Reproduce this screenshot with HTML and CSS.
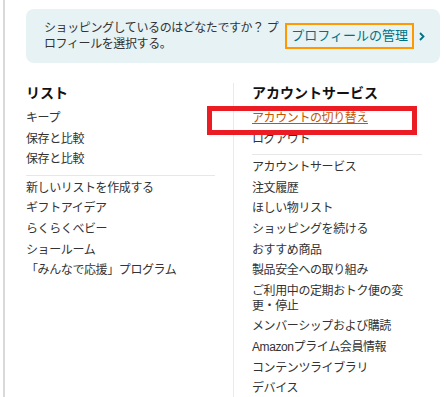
FILE: index.html
```html
<!DOCTYPE html>
<html lang="ja">
<head>
    <meta charset="UTF-8">
    <meta name="viewport" content="width=device-width, initial-scale=1.0">
    <title>アカウント＆リスト</title>
    <link rel="stylesheet" href="styles.css">
</head>
<body>
    <div class="flyout">
        <!-- Profile prompt -->
        <div class="profile-panel">
            <span class="profile-text">ショッピングしているのはどなたですか？ プロフィールを選択する。</span>
            <a class="profile-link" href="#">プロフィールの管理</a>
            <svg class="chevron" width="6" height="9" viewBox="0 0 6 9">
                <polyline points="1,1 4.5,4.5 1,8" fill="none" stroke="#007185" stroke-width="1.8"/>
            </svg>
        </div>

        <div class="columns">
            <div class="col col-lists">
                <div class="col-title">リスト</div>
                <a class="nav-item" href="#">キープ</a>
                <a class="nav-item" href="#">保存と比較</a>
                <a class="nav-item" href="#">保存と比較</a>
                <div class="divider"></div>
                <a class="nav-item" href="#">新しいリストを作成する</a>
                <a class="nav-item" href="#">ギフトアイデア</a>
                <a class="nav-item" href="#">らくらくベビー</a>
                <a class="nav-item" href="#">ショールーム</a>
                <a class="nav-item" href="#">「みんなで応援」プログラム</a>
            </div>
            <div class="col col-account">
                <div class="col-title">アカウントサービス</div>
                <div class="switch-row">
                    <a class="nav-item switch-link" href="#">アカウントの切り替え</a>
                    <div class="highlight-box"></div>
                </div>
                <a class="nav-item" href="#">ログアウト</a>
                <div class="divider"></div>
                <a class="nav-item" href="#">アカウントサービス</a>
                <a class="nav-item" href="#">注文履歴</a>
                <a class="nav-item" href="#">ほしい物リスト</a>
                <a class="nav-item" href="#">ショッピングを続ける</a>
                <a class="nav-item" href="#">おすすめ商品</a>
                <a class="nav-item" href="#">製品安全への取り組み</a>
                <a class="nav-item" href="#">ご利用中の定期おトク便の変更・停止</a>
                <a class="nav-item" href="#">メンバーシップおよび購読</a>
                <a class="nav-item" href="#">Amazonプライム会員情報</a>
                <a class="nav-item" href="#">コンテンツライブラリ</a>
                <a class="nav-item" href="#">デバイス</a>
            </div>
        </div>
    </div>
</body>
</html>
```

FILE: styles.css
```css
/* General */
body {
    margin: 0;
    font-family: "Liberation Sans", "Noto Sans CJK JP", sans-serif;
    font-size: 12px;
    letter-spacing: -0.4px;
    color: #333;
    background: #fff;
    overflow: hidden;
}

a {
    text-decoration: none;
    color: inherit;
}

/* Flyout container */
.flyout {
    margin-left: 3px;
    border-left: 2px solid #d9d9d9;
    min-height: 100vh;
    box-sizing: border-box;
    padding: 9px 6px 0 21px;
}

/* Profile panel */
.profile-panel {
    display: flex;
    align-items: center;
    background-color: #e6f2f3;
    border-radius: 8px;
    padding: 11px 15px 11px 18px;
}

.profile-text {
    flex: 1;
    line-height: 16px;
    color: #333;
}

.profile-link {
    margin-left: 2px;
    padding: 2px 4px;
    font-size: 13px;
    letter-spacing: 0;
    line-height: 18px;
    color: #007185;
    border: 2px solid #f90;
    white-space: nowrap;
}

.chevron {
    margin-left: 5px;
    flex-shrink: 0;
}

/* Columns */
.columns {
    display: flex;
    margin-top: 20px;
}

.col {
    display: flex;
    flex-direction: column;
    align-items: flex-start;
}

.col-lists {
    width: 189px;
    margin-right: 18px;
}

.col-account {
    flex: 1;
    border-left: 1px solid #eaeaea;
    padding: 0 18px;
    min-height: 330px;
}

.col-title {
    font-size: 14px;
    font-weight: bold;
    letter-spacing: 0;
    line-height: 20px;
    color: #111;
    margin-bottom: 8px;
}

.nav-item {
    display: block;
    line-height: 15px;
    margin-bottom: 5.6px;
    color: #333;
}

.divider {
    align-self: stretch;
    height: 1px;
    background-color: #e7e7e7;
    margin: 2px 0 5px;
}

/* Highlighted account switch */
.switch-row {
    position: relative;
}

.switch-link {
    color: #c45500;
    text-decoration: underline;
}

.highlight-box {
    position: absolute;
    left: -45px;
    top: -5px;
    width: 200px;
    height: 19px;
    border: 5px solid #ec1c24;
    pointer-events: none;
}
```
